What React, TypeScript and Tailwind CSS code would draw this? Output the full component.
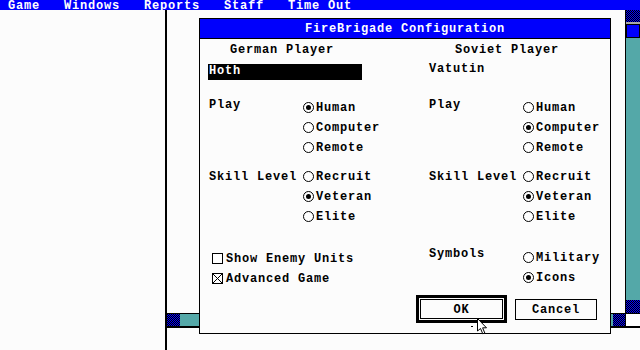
import React from 'react'

const checker =
  'bg-[repeating-conic-gradient(#0000fc_0%_25%,#000_0%_50%)] bg-[length:2px_2px]'

function Radio({ label, on }: { label: string; on?: boolean }) {
  return (
    <div className="flex h-[20px] items-center">
      <span className="mr-[2px] flex h-[11px] w-[11px] items-center justify-center rounded-full border border-black bg-white">
        {on && <span className="h-[5px] w-[5px] rounded-full bg-black" />}
      </span>
      <span className="pt-[2px]">{label}</span>
    </div>
  )
}

function Check({ label, on }: { label: string; on?: boolean }) {
  return (
    <div className="flex h-[20px] items-center pl-[3px]">
      <span className="mr-[3px] h-[11px] w-[11px] border border-black bg-white">
        {on && (
          <svg width="9" height="9" viewBox="0 0 9 9" className="block">
            <path d="M0 0L9 9M9 0L0 9" stroke="#000" strokeWidth="1" />
          </svg>
        )}
      </span>
      <span className="pt-[2px]">{label}</span>
    </div>
  )
}

// label on the left, radio stack on the right
function Group({
  label,
  options,
  selected,
  labelCentered,
}: {
  label: string
  options: string[]
  selected: number
  labelCentered?: boolean
}) {
  return (
    <div className="flex">
      {labelCentered ? (
        <div className="flex h-[20px] w-[94px] items-center">
          <span className="pt-[2px]">{label}</span>
        </div>
      ) : (
        <div className="w-[94px] pt-[3px]">{label}</div>
      )}
      <div className="flex flex-col">
        {options.map((o, i) => (
          <Radio key={o} label={o} on={i === selected} />
        ))}
      </div>
    </div>
  )
}

function Dialog() {
  return (
    <div className="absolute left-[199px] top-[18px] flex h-[316px] w-[412px] flex-col border border-black bg-[#fcfcfc]">
      {/* Title bar */}
      <div className="flex h-[20px] items-center justify-center border-b border-black bg-[#0000fc] pt-[1px] text-white">
        FireBrigade Configuration
      </div>

      <div className="grid grid-cols-[220px_181px] pl-[9px] pt-[6px]">
        {/* German column */}
        <div className="flex flex-col">
          <div className="h-[10px] pl-[21px]">German Player</div>
          <div className="ml-[-1px] mt-[9px] h-[16px] w-[154px] bg-black pl-[1px] pt-[2px] text-white">
            Hoth
          </div>
          <div className="mt-[17px]">
            <Group label="Play" options={['Human', 'Computer', 'Remote']} selected={0} />
          </div>
          <div className="mt-[9px]">
            <Group
              label="Skill Level"
              options={['Recruit', 'Veteran', 'Elite']}
              selected={1}
              labelCentered
            />
          </div>
          <div className="mt-[22px] flex flex-col">
            <Check label="Show Enemy Units" />
            <Check label="Advanced Game" on />
          </div>
        </div>

        {/* Soviet column */}
        <div className="flex flex-col">
          <div className="h-[10px] pl-[26px]">Soviet Player</div>
          <div className="mt-[9px] h-[16px]">Vatutin</div>
          <div className="mt-[17px]">
            <Group label="Play" options={['Human', 'Computer', 'Remote']} selected={1} />
          </div>
          <div className="mt-[9px]">
            <Group
              label="Skill Level"
              options={['Recruit', 'Veteran', 'Elite']}
              selected={1}
              labelCentered
            />
          </div>
          <div className="mt-[21px] flex">
            <div className="w-[94px] pt-[2px]">Symbols</div>
            <div className="flex flex-col">
              <Radio label="Military" />
              <Radio label="Icons" on />
            </div>
          </div>
        </div>
      </div>

      {/* Buttons */}
      <div className="mt-[7px] flex items-center justify-end gap-[8px] pr-[13px]">
        <div className="border-[3px] border-black p-[1px]">
          <div className="flex h-[20px] w-[83px] items-center justify-center border border-black pt-[2px]">
            OK
          </div>
        </div>
        <div className="flex h-[21px] w-[82px] items-center justify-center border border-black pt-[2px]">
          Cancel
        </div>
      </div>
    </div>
  )
}

export default function App() {
  return (
    <div className="relative h-[350px] w-[640px] overflow-hidden bg-[#fcfcfc] font-['Liberation_Mono',monospace] text-[12px] font-bold leading-[10px] tracking-[0.8px] text-black">
      {/* Menu bar */}
      <div className="flex h-[10px] gap-[24px] bg-[#0000fc] pl-[8px] leading-[12px] text-white">
        <span>Game</span>
        <span>Windows</span>
        <span>Reports</span>
        <span>Staff</span>
        <span>Time Out</span>
      </div>

      <div className="flex h-[340px]">
        <div className="w-[165px]" />
        {/* Window behind the dialog */}
        <div className="flex flex-1 flex-col border-l-2 border-black">
          <div className="flex h-[303px]">
            <div className="flex-1" />
            <div className="flex w-[15px] flex-col border-l border-black">
              <div className={`h-[12px] ${checker}`} />
              <div className="h-[2px] bg-[#a8a8a8]" />
              <div className="h-[14px] bg-black p-[1px]">
                <div className="h-full w-full bg-[#0000fc]" />
              </div>
              <div className="flex-1 bg-[#54a8a8]" />
              <div className={`h-[13px] ${checker}`} />
            </div>
          </div>
          <div className="flex h-[15px] border-t border-b-2 border-black">
            <div className={`w-[13px] ${checker}`} />
            <div className="flex-1 bg-[#54a8a8]" />
            <div className={`w-[12px] ${checker}`} />
            <div className="w-[15px] border-l border-black bg-white" />
          </div>
        </div>
      </div>

      <Dialog />

      {/* Mouse pointer */}
      <svg
        className="absolute left-[477px] top-[318px]"
        width="11"
        height="17"
        viewBox="0 0 11 17"
      >
        <path
          d="M0.5 0.5L0.5 13L3.5 10.5L5.8 15.8L7.8 15L5.6 9.8L9.5 9.8Z"
          fill="#fff"
          stroke="#000"
          strokeWidth="1"
        />
      </svg>
      <div className="absolute left-[471px] top-[326px] h-[1px] w-[2px] bg-black" />
    </div>
  )
}
